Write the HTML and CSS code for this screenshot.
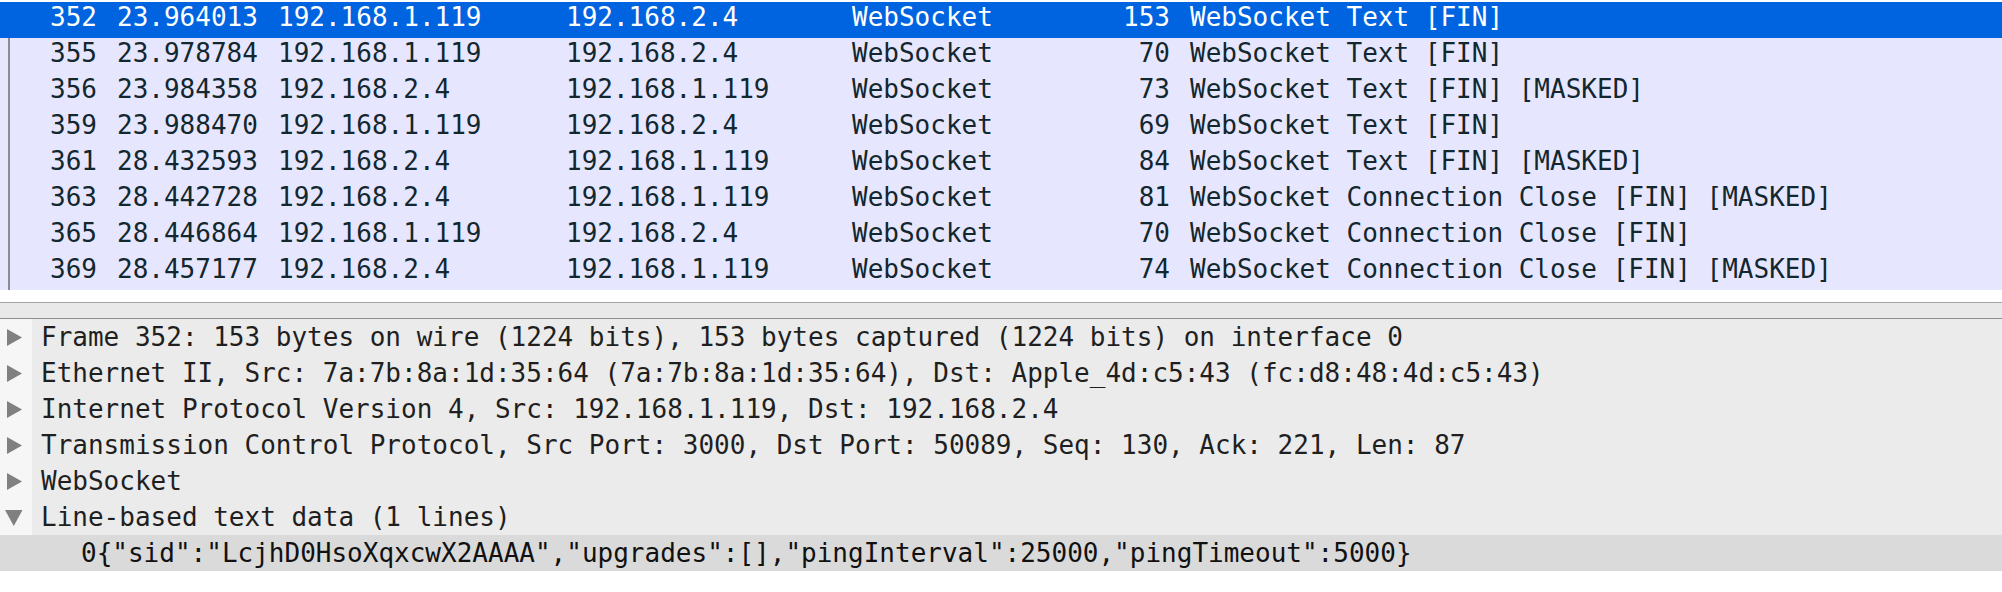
FILE: index.html
```html
<!DOCTYPE html>
<html>
<head>
<meta charset="utf-8">
<link rel="stylesheet" href="styles.css">
</head>
<body>
<div class="packets">
  <div class="row selected"><span class="c no">352</span><span class="c time">23.964013</span><span class="c src">192.168.1.119</span><span class="c dst">192.168.2.4</span><span class="c proto">WebSocket</span><span class="c len">153</span><span class="c info">WebSocket Text [FIN]</span></div>
  <div class="row"><span class="c no">355</span><span class="c time">23.978784</span><span class="c src">192.168.1.119</span><span class="c dst">192.168.2.4</span><span class="c proto">WebSocket</span><span class="c len">70</span><span class="c info">WebSocket Text [FIN]</span></div>
  <div class="row"><span class="c no">356</span><span class="c time">23.984358</span><span class="c src">192.168.2.4</span><span class="c dst">192.168.1.119</span><span class="c proto">WebSocket</span><span class="c len">73</span><span class="c info">WebSocket Text [FIN] [MASKED]</span></div>
  <div class="row"><span class="c no">359</span><span class="c time">23.988470</span><span class="c src">192.168.1.119</span><span class="c dst">192.168.2.4</span><span class="c proto">WebSocket</span><span class="c len">69</span><span class="c info">WebSocket Text [FIN]</span></div>
  <div class="row"><span class="c no">361</span><span class="c time">28.432593</span><span class="c src">192.168.2.4</span><span class="c dst">192.168.1.119</span><span class="c proto">WebSocket</span><span class="c len">84</span><span class="c info">WebSocket Text [FIN] [MASKED]</span></div>
  <div class="row"><span class="c no">363</span><span class="c time">28.442728</span><span class="c src">192.168.2.4</span><span class="c dst">192.168.1.119</span><span class="c proto">WebSocket</span><span class="c len">81</span><span class="c info">WebSocket Connection Close [FIN] [MASKED]</span></div>
  <div class="row"><span class="c no">365</span><span class="c time">28.446864</span><span class="c src">192.168.1.119</span><span class="c dst">192.168.2.4</span><span class="c proto">WebSocket</span><span class="c len">70</span><span class="c info">WebSocket Connection Close [FIN]</span></div>
  <div class="row last"><span class="c no">369</span><span class="c time">28.457177</span><span class="c src">192.168.2.4</span><span class="c dst">192.168.1.119</span><span class="c proto">WebSocket</span><span class="c len">74</span><span class="c info">WebSocket Connection Close [FIN] [MASKED]</span></div>
</div>
<div class="splitter"></div>
<div class="details">
  <div class="node"><span class="arrow"><svg width="32" height="36" viewBox="0 0 32 36"><polygon points="7,10 22,18.5 7,27" fill="#808080"/></svg></span><span class="label">Frame 352: 153 bytes on wire (1224 bits), 153 bytes captured (1224 bits) on interface 0</span></div>
  <div class="node"><span class="arrow"><svg width="32" height="36" viewBox="0 0 32 36"><polygon points="7,10 22,18.5 7,27" fill="#808080"/></svg></span><span class="label">Ethernet II, Src: 7a:7b:8a:1d:35:64 (7a:7b:8a:1d:35:64), Dst: Apple_4d:c5:43 (fc:d8:48:4d:c5:43)</span></div>
  <div class="node"><span class="arrow"><svg width="32" height="36" viewBox="0 0 32 36"><polygon points="7,10 22,18.5 7,27" fill="#808080"/></svg></span><span class="label">Internet Protocol Version 4, Src: 192.168.1.119, Dst: 192.168.2.4</span></div>
  <div class="node"><span class="arrow"><svg width="32" height="36" viewBox="0 0 32 36"><polygon points="7,10 22,18.5 7,27" fill="#808080"/></svg></span><span class="label">Transmission Control Protocol, Src Port: 3000, Dst Port: 50089, Seq: 130, Ack: 221, Len: 87</span></div>
  <div class="node"><span class="arrow"><svg width="32" height="36" viewBox="0 0 32 36"><polygon points="7,10 22,18.5 7,27" fill="#808080"/></svg></span><span class="label">WebSocket</span></div>
  <div class="node"><span class="arrow"><svg width="32" height="36" viewBox="0 0 32 36"><polygon points="5,11 22.5,11 13.75,27" fill="#808080"/></svg></span><span class="label">Line-based text data (1 lines)</span></div>
  <div class="leaf">0{"sid":"LcjhD0HsoXqxcwX2AAAA","upgrades":[],"pingInterval":25000,"pingTimeout":5000}</div>
</div>
</body>
</html>
```
FILE: styles.css
```css
html, body {
  margin: 0;
  padding: 0;
  background: #ffffff;
}
body {
  width: 2002px;
  height: 592px;
  overflow: hidden;
  font-family: "DejaVu Sans Mono", "Liberation Mono", monospace;
  font-size: 26px;
}
.packets {
  padding-top: 2px;
  padding-bottom: 12px;
}
.row {
  display: grid;
  grid-template-columns: 107px 161px 288px 286px 238px 100px 1fr;
  height: 36px;
  box-sizing: border-box;
  line-height: 31px;
  padding-bottom: 5px;
  color: #12272e;
  background: linear-gradient(to right, transparent 8px, #8c8c8c 8px, #8c8c8c 10px, transparent 10px), #e7e6ff;
  white-space: pre;
}
.row.selected {
  background: #0064e1;
  color: #ffffff;
}
.c {
  padding: 0 10px;
  overflow: hidden;
}
.no, .len {
  text-align: right;
}
.splitter {
  height: 15px;
  border-top: 1px solid #a4a4a4;
  border-bottom: 1px solid #8f8f8f;
  background: #e9e9e9;
}
.details {
  color: #1f1f1f;
}
.node {
  display: flex;
  height: 36px;
  line-height: 36px;
  background: #ebebeb;
  white-space: pre;
}
.arrow {
  width: 32px;
  height: 36px;
  flex: none;
  background: #f6f6f6;
}
.arrow svg {
  display: block;
}
.label {
  padding-left: 9px;
}
.leaf {
  height: 36px;
  line-height: 36px;
  padding-left: 81px;
  background: #dadada;
  color: #111111;
  white-space: pre;
}
```
